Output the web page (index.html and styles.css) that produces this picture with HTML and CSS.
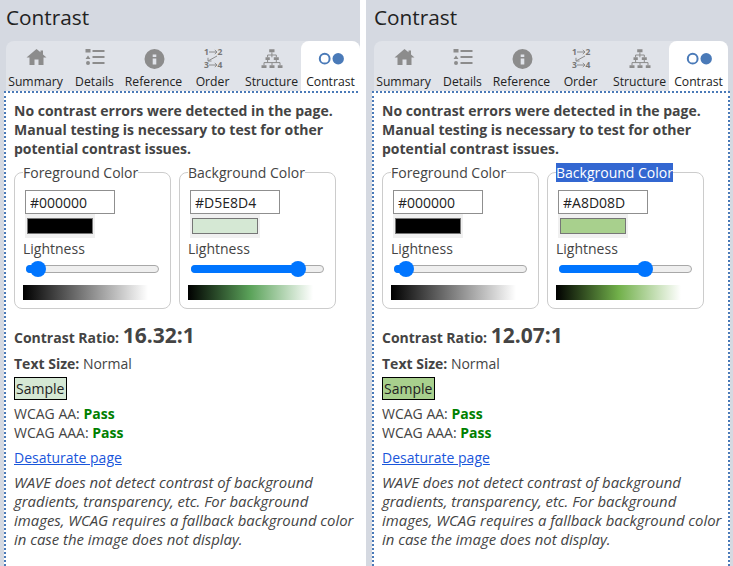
FILE: index.html
```html
<!DOCTYPE html>
<html lang="en">
<head>
  <meta charset="utf-8" />
  <title>Contrast</title>
  <link rel="stylesheet" href="styles.css">
</head>
<body>
<div class="page">

<section class="panel">
  <h1>Contrast</h1>
  <ul class="tabs">
    <li class="tab"><svg class="ico" viewBox="0 0 22 22"><path d="M11.500 2 1.500 10.500h3V18h5v-5.500h4V18h5v-7.500h3L18 7.500V3.500h-2.500v1.800z"/></svg>Summary</li>
    <li class="tab"><svg class="ico" viewBox="0 0 22 22"><path d="M1.500 2h5v3.500h-5zM4 8.500 6.500 12h-5zM4 14a2 2 0 1 1 0 4 2 2 0 0 1 0-4zM8.500 3h12v2h-12zM8.500 9h12v2h-12zM8.500 15h12v2h-12z"/></svg>Details</li>
    <li class="tab"><svg class="ico" viewBox="0 0 22 22"><path fill-rule="evenodd" d="M11.500 2a10 10 0 1 1 0 20 10 10 0 0 1 0-20zM9.700 7.500V10h3.600V7.500zM9.700 11.500v6h3.600v-6z"/></svg>Reference</li>
    <li class="tab"><svg class="ico" viewBox="0 0 22 22"><text x="2" y="8" class="num">1</text><text x="15.500" y="8" class="num">2</text><text x="2" y="21" class="num">3</text><text x="15.500" y="21" class="num">4</text><path class="arrow" d="M7 5h8M12.800 3 15 5l-2.200 2M15 9 6 14M6 10.800V14h3.500M7 18h8M12.800 16 15 18l-2.200 2"/></svg>Order</li>
    <li class="tab"><svg class="ico" viewBox="0 0 22 22"><path d="M8.200 2.300h5.300v3H8.200zM4.500 10.300h4.300V13H4.500zM12.800 10.300h5V13h-5zM.500 18.300h5V21h-5zM8.500 18.300h5V21h-5zM16.800 18.300h4.700V21h-4.700z"/><path class="line" d="M10.900 5.300v5M6.600 10.300V8h8.700v2.300M3 18.300v-2.700h16v2.700M11 15.600v2.700M6.600 13v2.600M15.300 13v2.600"/></svg>Structure</li>
    <li class="tab active"><svg class="ico ico-contrast" viewBox="0 0 26 22"><circle cx="6.700" cy="11.700" r="4.900"/><circle class="full" cx="20.200" cy="11.700" r="5.700"/></svg>Contrast</li>
  </ul>
  <div class="body">
    <p class="lead">No contrast errors were detected in the page. Manual testing is necessary to test for other potential contrast issues.</p>
    <div class="colors">
      <fieldset class="color">
        <legend>Foreground Color</legend>
        <input class="hex" type="text" value="#000000">
        <span class="well"><span class="swatch swatch-black"></span></span>
        <label class="light-label">Lightness</label>
        <div class="slider"><div class="fill" style="width:12px"><div class="knob"></div></div></div>
        <div class="ramp ramp-grey"></div>
      </fieldset>
      <fieldset class="color">
        <legend>Background Color</legend>
        <input class="hex" type="text" value="#D5E8D4">
        <span class="well"><span class="swatch" style="background:#d5e8d4"></span></span>
        <label class="light-label">Lightness</label>
        <div class="slider"><div class="fill" style="width:107px"><div class="knob"></div></div></div>
        <div class="ramp ramp-green"></div>
      </fieldset>
    </div>
    <p class="ratio"><b>Contrast Ratio:</b> <b class="big">16.32:1</b></p>
    <p class="size"><b>Text Size:</b> Normal</p>
    <p class="sample-row"><span class="sample" style="background:#d5e8d4">Sample</span></p>
    <p class="wcag">WCAG AA: <b class="pass">Pass</b><br>WCAG AAA: <b class="pass">Pass</b></p>
    <p class="link-row"><a href="#">Desaturate page</a></p>
    <p class="note">WAVE does not detect contrast of background gradients, transparency, etc. For background images, WCAG requires a fallback background color in case the image does not display.</p>
  </div>
</section>

<section class="panel panel-second">
  <h1>Contrast</h1>
  <ul class="tabs">
    <li class="tab"><svg class="ico" viewBox="0 0 22 22"><path d="M11.500 2 1.500 10.500h3V18h5v-5.500h4V18h5v-7.500h3L18 7.500V3.500h-2.500v1.800z"/></svg>Summary</li>
    <li class="tab"><svg class="ico" viewBox="0 0 22 22"><path d="M1.500 2h5v3.500h-5zM4 8.500 6.500 12h-5zM4 14a2 2 0 1 1 0 4 2 2 0 0 1 0-4zM8.500 3h12v2h-12zM8.500 9h12v2h-12zM8.500 15h12v2h-12z"/></svg>Details</li>
    <li class="tab"><svg class="ico" viewBox="0 0 22 22"><path fill-rule="evenodd" d="M11.500 2a10 10 0 1 1 0 20 10 10 0 0 1 0-20zM9.700 7.500V10h3.600V7.500zM9.700 11.500v6h3.600v-6z"/></svg>Reference</li>
    <li class="tab"><svg class="ico" viewBox="0 0 22 22"><text x="2" y="8" class="num">1</text><text x="15.500" y="8" class="num">2</text><text x="2" y="21" class="num">3</text><text x="15.500" y="21" class="num">4</text><path class="arrow" d="M7 5h8M12.800 3 15 5l-2.200 2M15 9 6 14M6 10.800V14h3.500M7 18h8M12.800 16 15 18l-2.200 2"/></svg>Order</li>
    <li class="tab"><svg class="ico" viewBox="0 0 22 22"><path d="M8.200 2.300h5.300v3H8.200zM4.500 10.300h4.300V13H4.500zM12.800 10.300h5V13h-5zM.500 18.300h5V21h-5zM8.500 18.300h5V21h-5zM16.800 18.300h4.700V21h-4.700z"/><path class="line" d="M10.900 5.300v5M6.600 10.300V8h8.700v2.300M3 18.300v-2.700h16v2.700M11 15.600v2.700M6.600 13v2.600M15.300 13v2.600"/></svg>Structure</li>
    <li class="tab active"><svg class="ico ico-contrast" viewBox="0 0 26 22"><circle cx="6.700" cy="11.700" r="4.900"/><circle class="full" cx="20.200" cy="11.700" r="5.700"/></svg>Contrast</li>
  </ul>
  <div class="body">
    <p class="lead">No contrast errors were detected in the page. Manual testing is necessary to test for other potential contrast issues.</p>
    <div class="colors">
      <fieldset class="color">
        <legend>Foreground Color</legend>
        <input class="hex" type="text" value="#000000">
        <span class="well"><span class="swatch swatch-black"></span></span>
        <label class="light-label">Lightness</label>
        <div class="slider"><div class="fill" style="width:12px"><div class="knob"></div></div></div>
        <div class="ramp ramp-grey"></div>
      </fieldset>
      <fieldset class="color">
        <legend class="selected">Background Color</legend>
        <input class="hex" type="text" value="#A8D08D">
        <span class="well"><span class="swatch" style="background:#a8d08d"></span></span>
        <label class="light-label">Lightness</label>
        <div class="slider"><div class="fill" style="width:86px"><div class="knob"></div></div></div>
        <div class="ramp ramp-lime"></div>
      </fieldset>
    </div>
    <p class="ratio"><b>Contrast Ratio:</b> <b class="big">12.07:1</b></p>
    <p class="size"><b>Text Size:</b> Normal</p>
    <p class="sample-row"><span class="sample" style="background:#a8d08d">Sample</span></p>
    <p class="wcag">WCAG AA: <b class="pass">Pass</b><br>WCAG AAA: <b class="pass">Pass</b></p>
    <p class="link-row"><a href="#">Desaturate page</a></p>
    <p class="note">WAVE does not detect contrast of background gradients, transparency, etc. For background images, WCAG requires a fallback background color in case the image does not display.</p>
  </div>
</section>

</div>
</body>
</html>
```

FILE: styles.css
```css
*{box-sizing:border-box;margin:0;padding:0;}
html,body{height:100%;background:#fff;overflow:hidden;}
body{font-family:"Open Sans","Noto Sans",sans-serif;font-size:14px;color:#444;}
.page{display:flex;gap:6px;height:566px;}
.panel{width:360px;height:566px;background:#d5d9e1;padding-left:6px;flex:none;overflow:hidden;}
.panel-second{width:367px;padding-left:8px;}
h1{font-size:20.800px;font-weight:400;color:#222;line-height:28px;padding:3px 0 10px 0;}
.tabs{display:flex;list-style:none;background:#e0e3e9;border-radius:8px 8px 0 0;width:354px;height:51px;}
.tab{width:59px;display:flex;flex-direction:column;align-items:center;font-size:12.200px;line-height:17px;color:#222;padding-top:6px;white-space:nowrap;}
.tab.active{background:#fff;border-radius:8px 8px 0 0;}
.ico{width:22px;height:22px;fill:#8c8c8c;margin-bottom:4px;flex:none;}
.ico .line{fill:none;stroke:#8c8c8c;stroke-width:1;}
.ico .num{font-size:8.500px;font-weight:700;fill:#777;}
.ico .arrow{fill:none;stroke:#8c8c8c;stroke-width:1;}
.ico-contrast{width:26px;}
.ico-contrast circle{fill:none;stroke:#4a7ab8;stroke-width:2;}
.ico-contrast .full{fill:#4a7ab8;stroke:none;}
.body{background:#fff;width:358px;height:475px;margin-top:-1px;margin-left:-2px;border:2px dotted #4a7ab8;border-bottom:0;padding:8px 8px 0;position:relative;}
.lead{font-weight:700;font-size:14px;line-height:19px;}
.colors{display:flex;gap:8px;margin-top:5px;}
.color{width:157px;height:146px;border:1px solid #ccc;border-radius:8px;padding:0 8px;display:flex;flex-direction:column;align-items:flex-start;}
legend{font-size:14px;line-height:19px;padding:0;margin-left:0;}
legend.selected{background:#3367d1;color:#fff;}
.hex{width:90px;height:24px;border:1px solid #8f8f8f;font:14px "Open Sans",sans-serif;color:#222;padding:0 4px;margin:8px 0 0 2px;}
.well{display:block;background:#f0f0f0;width:70px;height:24px;padding:4px 2px;margin-left:2px;}
.swatch{display:block;width:66px;height:16px;border:1px solid #767676;}
.swatch-black{background:#000;}
.light-label{font-size:14px;line-height:19px;margin-top:1px;}
.slider{position:relative;width:133px;height:8px;border:1px solid #a8a8a8;border-radius:4px;background:#efefef;margin:7px 0 0 3px;}
.fill{position:absolute;left:-1px;top:-1px;height:8px;background:#0075ff;border-radius:4px;}
.knob{position:absolute;right:-8px;top:-4px;width:16px;height:16px;border-radius:50%;background:#0075ff;}
.ramp{width:125px;height:15px;margin-top:12px;}
.ramp-grey{background:linear-gradient(to right,#000,#fff);}
.ramp-green{background:linear-gradient(to right,#000,#5ba35a 50%,#fff);}
.ramp-lime{background:linear-gradient(to right,#000,#71b04a 50%,#fff);}
.ratio{font-size:14px;margin-top:12px;line-height:28px;}
.big{font-size:21px;}
.size{margin-top:2px;line-height:19px;}
.sample-row{margin-top:4px;line-height:23px;}
.sample{display:inline-block;border:1px solid #000;color:#222;padding:0 2px 0 1px;line-height:21px;}
.wcag{margin-top:4px;line-height:19px;}
.pass{color:#008000;}
.link-row{margin-top:6px;line-height:19px;}
a{color:#1a56db;}
.note{margin:6px -5px 0 0;font-size:14.900px;font-style:italic;line-height:19px;}
```
